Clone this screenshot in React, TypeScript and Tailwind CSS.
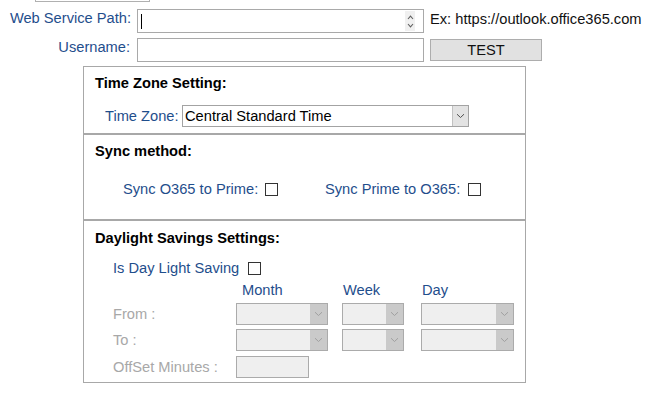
import React from "react";

const Chevron = ({ color }: { color: string }) => (
  <svg width="9" height="6" viewBox="0 0 9 6" className="block">
    <path d="M1 1.2 L4.5 4.5 L8 1.2" fill="none" stroke={color} strokeWidth="1" />
  </svg>
);

function Select({
  w,
  text,
  disabled,
}: {
  w: string;
  text?: string;
  disabled?: boolean;
}) {
  if (disabled) {
    return (
      <div className={`${w} h-[22px] flex border border-[#ababab] bg-[#efefef]`}>
        <div className="flex-1" />
        <div className="w-[17px] h-full bg-[#cacaca] flex items-center justify-center">
          <Chevron color="#a0a0a0" />
        </div>
      </div>
    );
  }
  return (
    <div className={`${w} h-[22px] flex border border-[#a3a3a3] bg-white`}>
      <div className="flex-1 pl-[2px] flex items-center text-black leading-[17px]">{text}</div>
      <div className="w-[16px] h-full bg-[#e3e3e3] border-l border-[#c2c2c2] flex items-center justify-center">
        <Chevron color="#505050" />
      </div>
    </div>
  );
}

const Checkbox = () => <div className="w-[13px] h-[13px] border border-[#333333] bg-white shrink-0" />;

export default function App() {
  return (
    <div className="w-[668px] h-[397px] bg-white overflow-hidden font-['Liberation_Sans',Arial,sans-serif] text-[14.67px] leading-[17px]">
      {/* partial box above */}
      <div className="ml-[35px] w-[115px] h-[2px] border-x border-b border-[#b0b0b0]" />

      {/* Row 1 */}
      <div className="mt-[7px] flex items-start h-[24px]">
        <div className="w-[132px] pr-[1px] pt-[1px] text-right text-[#1f4e8c] whitespace-nowrap">Web Service Path:</div>
        <div className="ml-[5px] w-[287px] h-[24px] border border-[#a9a9a9] bg-white relative">
          <div className="absolute left-[3px] top-[4px] w-[1px] h-[15px] bg-black" />
          <div className="absolute right-[8px] top-[1px] w-[10px] h-[20px] bg-[#f0f0f0] flex flex-col items-center justify-center gap-[3px]">
            <svg width="7" height="5" viewBox="0 0 7 5">
              <path d="M1 4 L3.5 1.2 L6 4" fill="none" stroke="#606060" strokeWidth="1.1" />
            </svg>
            <svg width="7" height="5" viewBox="0 0 7 5">
              <path d="M1 1 L3.5 3.8 L6 1" fill="none" stroke="#606060" strokeWidth="1.1" />
            </svg>
          </div>
        </div>
        <div className="ml-[6px] pt-[2px] text-[#111111] whitespace-nowrap">Ex: https://outlook.office365.com</div>
      </div>

      {/* Row 2 */}
      <div className="mt-[5px] flex items-start h-[24px]">
        <div className="w-[132px] pr-[2px] pt-[1px] text-right text-[#1f4e8c]">Username:</div>
        <div className="ml-[5px] w-[287px] h-[24px] border border-[#a9a9a9] bg-white" />
        <div className="ml-[6px] mt-[1px] w-[112px] h-[22px] border border-[#adadad] bg-[#e1e1e1] flex items-center justify-center text-[#111111]">
          TEST
        </div>
      </div>

      {/* Panel */}
      <div className="mt-[4px] ml-[83px] w-[443px] border border-[#a8a8a8]">
        {/* Section 1 */}
        <div className="h-[66px] pt-[8px]">
          <div className="pl-[11px] font-bold text-black">Time Zone Setting:</div>
          <div className="mt-[13px] pl-[21px] flex items-center">
            <div className="w-[77px] text-[#1f4e8c] whitespace-nowrap">Time Zone:</div>
            <Select w="w-[287px]" text="Central Standard Time" />
          </div>
        </div>

        {/* Section 2 */}
        <div className="border-t-2 border-[#a8a8a8] h-[86px] pt-[8px]">
          <div className="pl-[11px] font-bold text-black">Sync method:</div>
          <div className="mt-[20px] h-[18px] pl-[39px] flex items-center">
            <div className="w-[142px] text-[#1f4e8c] whitespace-nowrap">Sync O365 to Prime:</div>
            <Checkbox />
            <div className="ml-[47px] w-[143px] text-[#1f4e8c] whitespace-nowrap">Sync Prime to O365:</div>
            <Checkbox />
          </div>
        </div>

        {/* Section 3 */}
        <div className="border-t-2 border-[#a8a8a8] pt-[9px] pb-[4px]">
          <div className="pl-[11px] font-bold text-black">Daylight Savings Settings:</div>
          <div className="mt-[12px] h-[18px] pl-[29px] flex items-center">
            <div className="w-[135px] text-[#1f4e8c] whitespace-nowrap">Is Day Light Saving</div>
            <Checkbox />
          </div>
          <div className="pl-[29px] grid grid-cols-[123px_106px_79px_93px]">
            <div className="mt-[4px] h-[18px]" />
            <div className="mt-[4px] h-[18px] pl-[6px] text-[#1f4e8c] flex items-center">Month</div>
            <div className="mt-[4px] h-[18px] pl-[1px] text-[#1f4e8c] flex items-center">Week</div>
            <div className="mt-[4px] h-[18px] pl-[1px] text-[#1f4e8c] flex items-center">Day</div>

            <div className="mt-[4px] h-[22px] flex items-center text-[#a8a8a8]">From :</div>
            <div className="mt-[4px]"><Select w="w-[92px]" disabled /></div>
            <div className="mt-[4px]"><Select w="w-[62px]" disabled /></div>
            <div className="mt-[4px]"><Select w="w-[93px]" disabled /></div>

            <div className="mt-[4px] h-[22px] flex items-center text-[#a8a8a8]">To :</div>
            <div className="mt-[4px]"><Select w="w-[92px]" disabled /></div>
            <div className="mt-[4px]"><Select w="w-[62px]" disabled /></div>
            <div className="mt-[4px]"><Select w="w-[93px]" disabled /></div>

            <div className="mt-[5px] h-[22px] flex items-center text-[#a8a8a8] whitespace-nowrap">OffSet Minutes :</div>
            <div className="mt-[5px]">
              <div className="w-[73px] h-[22px] border border-[#ababab] bg-[#efefef]" />
            </div>
            <div />
            <div />
          </div>
        </div>
      </div>
    </div>
  );
}
